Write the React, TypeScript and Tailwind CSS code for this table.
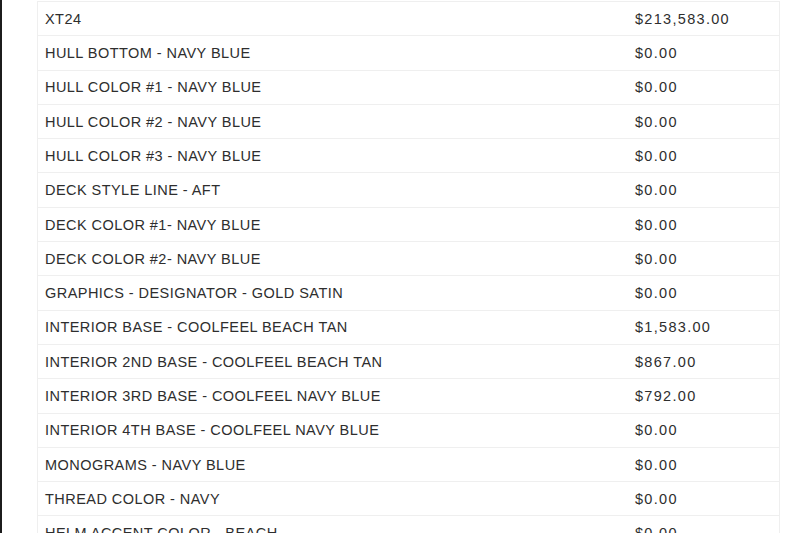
import React from 'react';

const rows: [string, string][] = [
    ['XT24', '$213,583.00'],
    ['HULL BOTTOM - NAVY BLUE', '$0.00'],
    ['HULL COLOR #1 - NAVY BLUE', '$0.00'],
    ['HULL COLOR #2 - NAVY BLUE', '$0.00'],
    ['HULL COLOR #3 - NAVY BLUE', '$0.00'],
    ['DECK STYLE LINE - AFT', '$0.00'],
    ['DECK COLOR #1- NAVY BLUE', '$0.00'],
    ['DECK COLOR #2- NAVY BLUE', '$0.00'],
    ['GRAPHICS - DESIGNATOR - GOLD SATIN', '$0.00'],
    ['INTERIOR BASE - COOLFEEL BEACH TAN', '$1,583.00'],
    ['INTERIOR 2ND BASE - COOLFEEL BEACH TAN', '$867.00'],
    ['INTERIOR 3RD BASE - COOLFEEL NAVY BLUE', '$792.00'],
    ['INTERIOR 4TH BASE - COOLFEEL NAVY BLUE', '$0.00'],
    ['MONOGRAMS - NAVY BLUE', '$0.00'],
    ['THREAD COLOR - NAVY', '$0.00'],
    ['HELM ACCENT COLOR - BEACH', '$0.00'],
];

export default function App() {
    return (
        <div className="w-[800px] h-[533px] overflow-hidden bg-white flex">
            {/* scanned page edge */}
            <div className="w-[2px] h-full bg-[#1c1c1c]" />
            <div className="flex-1 pl-[35px] pr-[20px] pt-[1px]">
                <div className="border-l border-r border-t border-[#efefef] font-['Liberation_Sans',sans-serif] text-[#2e2e2e] text-[14.5px]">
                    {rows.map(([label, price], i) => (
                        <div
                            key={i}
                            className="h-[34.3px] flex items-center pt-[2px] border-b border-[#efefef]"
                        >
                            <div className="w-[597px] pl-[7px] tracking-[0.45px]">{label}</div>
                            <div className="flex-1 tracking-[1.3px]">{price}</div>
                        </div>
                    ))}
                </div>
            </div>
        </div>
    );
}
